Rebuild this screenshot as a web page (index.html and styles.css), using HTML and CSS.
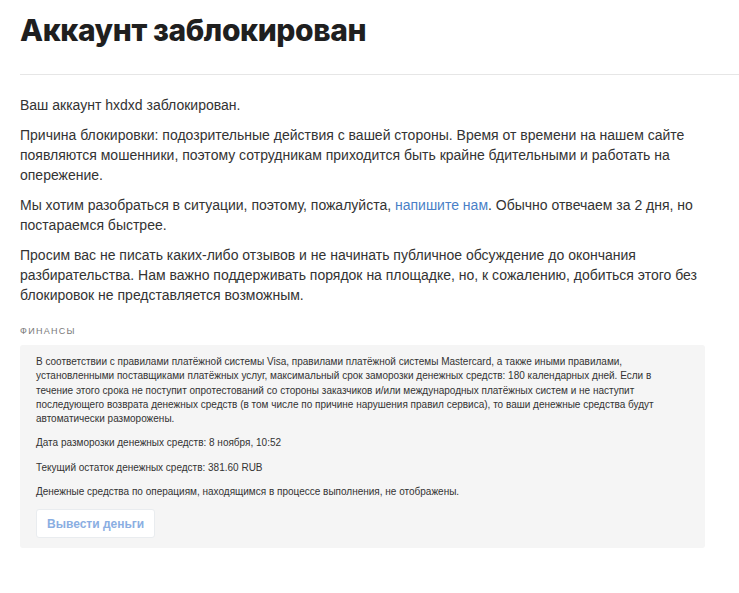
FILE: index.html
```html
<!DOCTYPE html>
<html lang="ru">
<head>
    <meta charset="utf-8">
    <title>Аккаунт заблокирован</title>
    <link rel="stylesheet" href="styles.css">
</head>
<body>
<div class="page-header">
    <h1>Аккаунт заблокирован</h1>
</div>

<div class="content">
    <p>Ваш аккаунт hxdxd заблокирован.</p>
    <p>Причина блокировки: подозрительные действия с вашей стороны. Время от времени на нашем сайте появляются мошенники, поэтому сотрудникам приходится быть крайне бдительными и работать на опережение.</p>
    <p>Мы хотим разобраться в ситуации, поэтому, пожалуйста, <a href="#">напишите нам</a>. Обычно отвечаем за 2 дня, но постараемся быстрее.</p>
    <p>Просим вас не писать каких-либо отзывов и не начинать публичное обсуждение до окончания разбирательства. Нам важно поддерживать порядок на площадке, но, к сожалению, добиться этого без блокировок не представляется возможным.</p>

    <div class="section-title">Финансы</div>
    <div class="finance">
        <p>В соответствии с правилами платёжной системы Visa, правилами платёжной системы Mastercard, а также иными правилами, установленными поставщиками платёжных услуг, максимальный срок заморозки денежных средств: 180 календарных дней. Если в течение этого срока не поступит опротестований со стороны заказчиков и/или международных платёжных систем и не наступит последующего возврата денежных средств (в том числе по причине нарушения правил сервиса), то ваши денежные средства будут автоматически разморожены.</p>
        <p>Дата разморозки денежных средств: 8 ноября, 10:52</p>
        <p>Текущий остаток денежных средств: 381.60 RUB</p>
        <p>Денежные средства по операциям, находящимся в процессе выполнения, не отображены.</p>
        <button class="btn" type="button">Вывести деньги</button>
    </div>
</div>
</body>
</html>
```

FILE: styles.css
```css
html, body {
    margin: 0;
    padding: 0;
    background: #ffffff;
}

body {
    font-family: 'Liberation Sans', Arial, sans-serif;
    font-size: 14px;
    color: #333333;
}

.page-header {
    margin-left: 20px;
    padding: 10px 0 24px;
    border-bottom: 1px solid #e6e6e6;
}

.page-header h1 {
    margin: 0;
    font-family: Inter, 'Noto Sans', sans-serif;
    font-size: 30px;
    font-weight: 800;
    line-height: 40px;
    letter-spacing: -0.4px;
    color: #1f1f1f;
}

.content {
    width: 685px;
    padding: 20px 0 0 20px;
}

.content p {
    margin: 0 0 10px;
    line-height: 20px;
}

.content a {
    color: #4a7fc7;
    text-decoration: none;
}

.section-title {
    margin-top: 20px;
    font-size: 9px;
    line-height: 12px;
    letter-spacing: 1.3px;
    text-transform: uppercase;
    color: #7a7a7a;
}

.finance {
    margin-top: 8px;
    padding: 10px 16px 10px;
    background: #f5f5f5;
    border-radius: 3px;
}

.content .finance p {
    margin: 0 0 10px;
    font-size: 10px;
    line-height: 14.3px;
    color: #333333;
}

.btn {
    display: block;
    height: 29px;
    padding: 0 10px;
    font-family: 'Liberation Sans', Arial, sans-serif;
    font-size: 12px;
    font-weight: bold;
    color: #8aaee2;
    background: #ffffff;
    border: 1px solid #e9ecef;
    border-radius: 3px;
    cursor: pointer;
}
```
